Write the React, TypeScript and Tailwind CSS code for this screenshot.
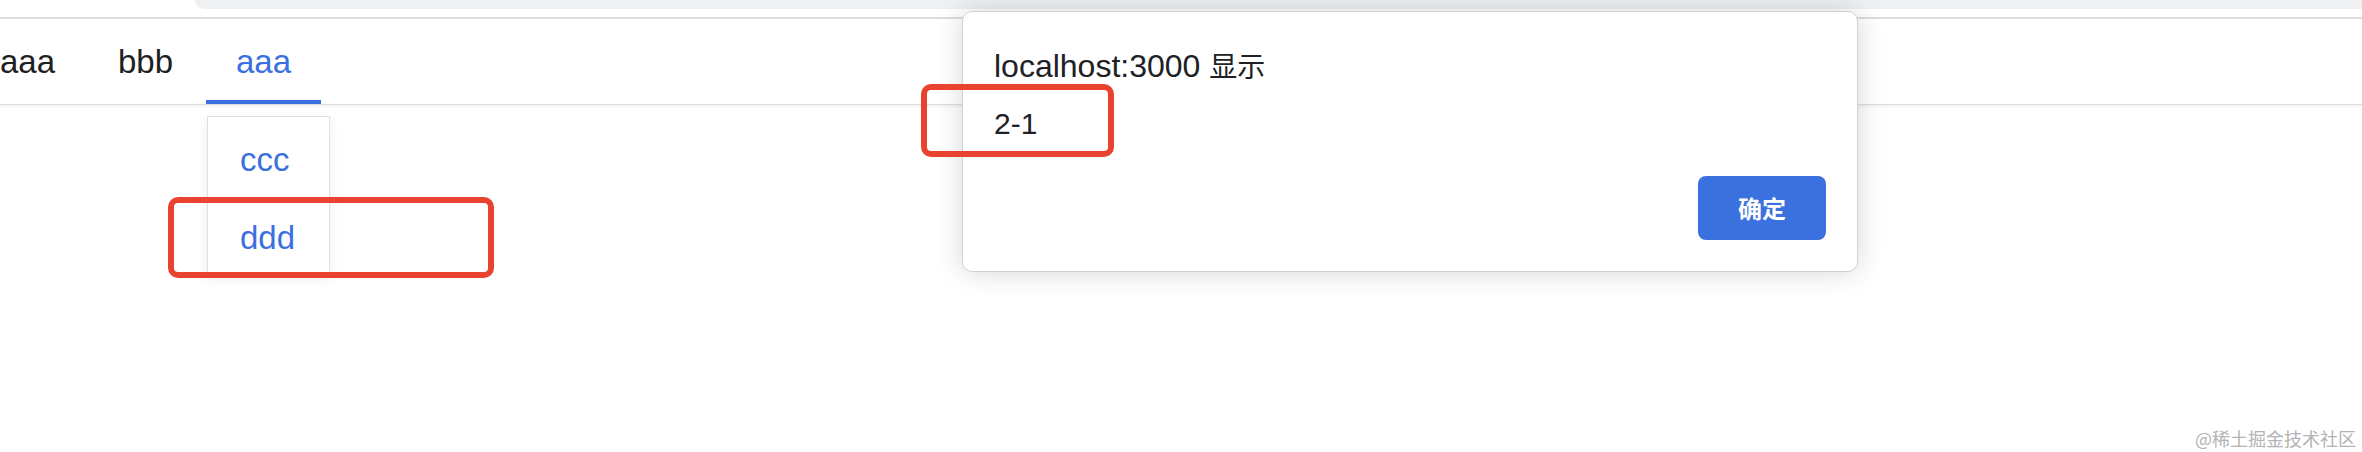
import React from 'react'

const latin = "font-['Liberation_Sans','Noto_Sans_CJK_SC',sans-serif]"
const cjk = "font-['Noto_Sans_CJK_SC',sans-serif]"

function Tabs() {
  const tabs = [
    { label: 'aaa', active: false },
    { label: 'bbb', active: false },
    { label: 'aaa', active: true },
  ]
  return (
    <div className="h-[86px] border-b border-[#dedede] shadow-[0_2px_3px_rgba(0,0,0,0.06)] flex gap-[3px] -ml-[30px]">
      {tabs.map((t, i) => (
        <div key={i} className="w-[115px] flex flex-col items-center pt-[26px]">
          <span className={`text-[33px] leading-[33px] ${t.active ? 'text-[#3a70e0]' : 'text-[#1f1f1f]'}`}>{t.label}</span>
          <div className="flex-1" />
          <div className={`w-full h-[4px] ${t.active ? 'bg-[#3a70e0]' : ''}`} />
        </div>
      ))}
    </div>
  )
}

function Dropdown() {
  return (
    <div className="absolute left-[207px] top-[116px] w-[123px] h-[159px] bg-white border border-[#e0e0e0] shadow-[0_4px_10px_rgba(0,0,0,0.08)] pt-[26px] pl-[32px] flex flex-col gap-[45px] text-[33px] leading-[33px] text-[#3a70e0]">
      <span>ccc</span>
      <span>ddd</span>
    </div>
  )
}

function AlertDialog() {
  return (
    <div className="absolute left-[962px] top-[11px] w-[896px] h-[261px] bg-white rounded-[10px] border border-[#d2d2d2] shadow-[0_0_28px_rgba(0,0,0,0.16)] flex flex-col pt-[37px] pl-[31px] pr-[31px] pb-[31px] text-[#202124]">
      <div className="text-[32px] leading-[32px]">
        localhost:3000 <span className={`${cjk} text-[28px]`}>显示</span>
      </div>
      <div className="mt-[27px] text-[30px] leading-[30px]">2-1</div>
      <div className="flex-1" />
      <button className={`self-end w-[128px] h-[64px] rounded-[8px] bg-[#3b71de] text-white text-[24px] font-bold ${cjk}`}>
        确定
      </button>
    </div>
  )
}

export default function App() {
  return (
    <div className={`relative w-[2362px] h-[452px] overflow-hidden bg-white ${latin}`}>
      <div className="h-[9px] flex">
        <div className="ml-[195px] flex-1 bg-[#eef0f2] rounded-bl-[12px]" />
      </div>
      <div className="h-[8px]" />
      <div className="h-[2px] bg-[#dcdcdc]" />
      <Tabs />

      <Dropdown />
      <AlertDialog />

      {/* annotation boxes */}
      <div className="absolute left-[168px] top-[197px] w-[326px] h-[81px] border-[6px] border-[#e8432e] rounded-[10px]" />
      <div className="absolute left-[921px] top-[84px] w-[193px] h-[73px] border-[6px] border-[#e8432e] rounded-[10px]" />

      <div className={`absolute right-[6px] bottom-[5px] text-[18px] leading-[18px] text-[#b3b3b3] ${cjk}`}>@稀土掘金技术社区</div>
    </div>
  )
}
